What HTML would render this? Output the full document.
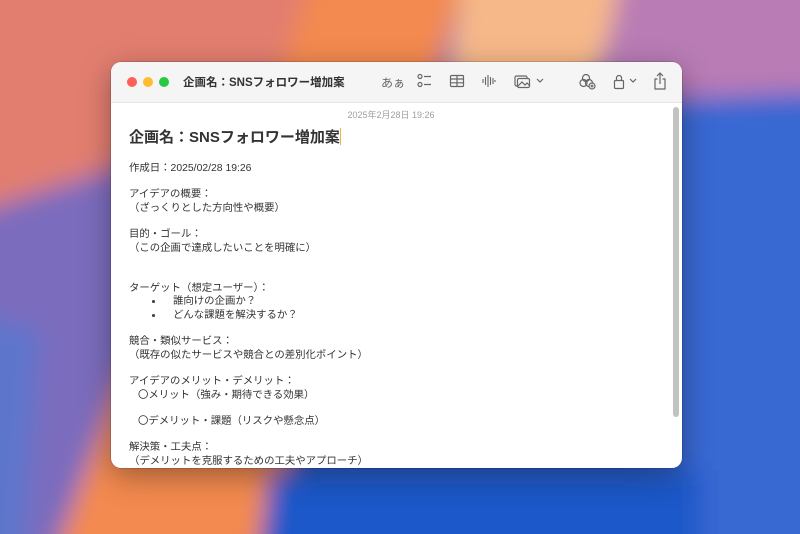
<!DOCTYPE html>
<html><head><meta charset="utf-8"><style>
html,body{margin:0;padding:0;width:800px;height:534px;overflow:hidden;font-family:"Liberation Sans","Noto Sans CJK JP",sans-serif;position:relative}
.bg{position:absolute;left:0;top:0;overflow:hidden}
.win{position:absolute;left:111px;top:62px;width:571px;height:406px;background:#fff;border-radius:10px;box-shadow:0 8px 30px rgba(0,0,0,.35),0 0 0 .5px rgba(0,0,0,.25);overflow:hidden}
.tb{position:absolute;left:0;top:0;width:100%;height:40px;background:#f6f5f5;border-bottom:1px solid #e4e4e4}
.dot{position:absolute;top:15px;width:10px;height:10px;border-radius:50%}
.title{position:absolute;left:72px;top:12px;font-size:11.5px;font-weight:bold;color:#333}
.ic{position:absolute;top:11px}
.body{position:absolute;left:0;top:41px;right:0;bottom:0;overflow:hidden}
.date{position:absolute;top:5px;left:0;width:560px;text-align:center;font-size:9px;color:#a0a0a0}
.h{position:absolute;left:18px;top:23px;font-size:15px;font-weight:bold;color:#333}
.t{position:absolute;left:18px;font-size:10.4px;line-height:13px;color:#333;white-space:pre}
.bu{position:absolute;left:41px;width:2.5px;height:2.5px;border-radius:50%;background:#444}
.sb{position:absolute;right:3px;top:4px;width:6px;height:310px;background:#c2c2c2;border-radius:3px}
</style></head><body>
<svg class="bg" width="800" height="534" viewBox="0 0 800 534">
<defs><filter id="b" x="-20%" y="-20%" width="140%" height="140%"><feGaussianBlur stdDeviation="12"/></filter></defs>
<rect width="800" height="534" fill="#2f62cc"/>
<g filter="url(#b)">
<rect x="-80" y="-80" width="960" height="700" fill="#2f62cc"/>
<polygon points="-80,-80 500,-80 300,260 150,620 -80,620" fill="#7b6cbd"/>
<polygon points="-80,-80 470,-80 330,80 110,170 -80,230" fill="#e27e70"/>
<polygon points="-80,300 40,330 20,620 -80,620" fill="#5d76cc"/>
<polygon points="330,-80 480,-80 430,110 310,300 270,620 30,620 120,380 240,200" fill="#f38a50"/>
<polygon points="470,-80 640,-80 600,70 520,130 440,150" fill="#f6b889"/>
<polygon points="630,-80 880,-80 880,90 720,130 600,100" fill="#b97bb5"/>
<polygon points="640,100 880,90 880,620 660,620 620,300" fill="#3767d2"/>
<polygon points="270,470 700,470 700,620 250,620" fill="#1f58c9"/>
</g>
</svg>
<div class="win">
<div class="tb">
<div class="dot" style="left:16px;background:#fe5f57"></div>
<div class="dot" style="left:32px;background:#febc2e"></div>
<div class="dot" style="left:48px;background:#28c840"></div>
<div class="title">企画名：SNSフォロワー増加案</div>
<div class="ic" style="left:270px;top:12px;font-size:12px;color:#666">あぁ</div>
<svg class="ic" style="left:306px" width="16" height="16" viewBox="0 0 16 16" fill="none" stroke="#666" stroke-width="1.2"><circle cx="3" cy="3.5" r="2"/><circle cx="3" cy="11.5" r="2"/><path d="M7 3.5h7M7 11.5h7"/></svg>
<svg class="ic" style="left:338px" width="16" height="16" viewBox="0 0 16 16" fill="none" stroke="#666" stroke-width="1.2"><rect x="1.5" y="2.5" width="13" height="11" rx="1"/><path d="M1.5 6h13M1.5 9.8h13M8 2.5v11"/></svg>
<svg class="ic" style="left:370px" width="16" height="16" viewBox="0 0 16 16" fill="none" stroke="#666" stroke-width="1.1"><path d="M2 6v4M4.5 4v8M7 2v12M9.5 4v8M12 5v6M14 7v2"/></svg>
<svg class="ic" style="left:403px" width="18" height="16" viewBox="0 0 18 16" fill="none" stroke="#666" stroke-width="1.2"><rect x="1" y="3" width="12" height="10" rx="1.5"/><rect x="3.5" y="5.5" width="12" height="9" rx="1.5" fill="#f6f5f5"/><path d="M4 13l4-4 3 3 2-2 3 3"/></svg>
<svg class="ic" style="left:425px;top:16px" width="8" height="6" viewBox="0 0 8 6" fill="none" stroke="#666" stroke-width="1.2"><path d="M1 1l3 3 3-3"/></svg>
<svg class="ic" style="left:468px" width="18" height="17" viewBox="0 0 18 17" fill="none" stroke="#666" stroke-width="1.2"><circle cx="7" cy="5" r="3.5"/><circle cx="4.5" cy="10" r="3.5"/><circle cx="10" cy="10" r="3.5"/><circle cx="13" cy="13" r="3" fill="#f6f5f5"/><path d="M11.5 13h3M13 11.5v3"/></svg>
<svg class="ic" style="left:502px" width="12" height="17" viewBox="0 0 12 17" fill="none" stroke="#666" stroke-width="1.2"><rect x="1.5" y="7.5" width="9" height="8" rx="1"/><path d="M3.5 7.5V5a2.5 2.5 0 0 1 5 0v2.5"/></svg>
<svg class="ic" style="left:518px;top:16px" width="8" height="6" viewBox="0 0 8 6" fill="none" stroke="#666" stroke-width="1.2"><path d="M1 1l3 3 3-3"/></svg>
<svg class="ic" style="left:542px;top:10px" width="14" height="18" viewBox="0 0 14 18" fill="none" stroke="#666" stroke-width="1.2"><path d="M4.5 7H2v10h10V7H9.5M7 1v11M4 4l3-3 3 3"/></svg>
</div>
<div class="body">
<div class="date">2025年2月28日 19:26</div>
<div class="h">企画名：SNSフォロワー増加案<span style="display:inline-block;width:1px;height:17px;background:#e6b84a;vertical-align:-3px"></span></div>
<div class="t" style="top:59px">作成日：2025/02/28 19:26</div>
<div class="t" style="top:85px">アイデアの概要：</div>
<div class="t" style="top:99px">（ざっくりとした方向性や概要）</div>
<div class="t" style="top:125px">目的・ゴール：</div>
<div class="t" style="top:139px">（この企画で達成したいことを明確に）</div>
<div class="t" style="top:179px">ターゲット（想定ユーザー）：</div>
<div class="bu" style="top:197px"></div><div class="t" style="top:192px;left:62px">誰向けの企画か？</div>
<div class="bu" style="top:211px"></div><div class="t" style="top:206px;left:62px">どんな課題を解決するか？</div>
<div class="t" style="top:232px">競合・類似サービス：</div>
<div class="t" style="top:246px">（既存の似たサービスや競合との差別化ポイント）</div>
<div class="t" style="top:272px">アイデアのメリット・デメリット：</div>
<div class="t" style="top:286px;left:27px">〇メリット（強み・期待できる効果）</div>
<div class="t" style="top:312px;left:27px">〇デメリット・課題（リスクや懸念点）</div>
<div class="t" style="top:338px">解決策・工夫点：</div>
<div class="t" style="top:352px">（デメリットを克服するための工夫やアプローチ）</div>
<div class="sb"></div>
</div>
</div>
</body></html>
